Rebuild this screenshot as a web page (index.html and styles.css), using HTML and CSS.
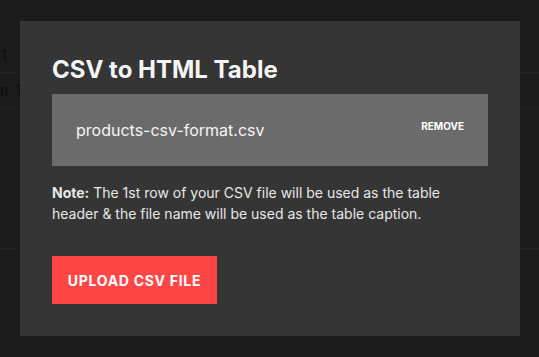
FILE: index.html
```html
<!DOCTYPE html>
<html lang="en">
<head>
<meta charset="utf-8">
<title>CSV to HTML Table</title>
<link rel="stylesheet" href="styles.css">
</head>
<body>
  <div class="page">
    <div class="row row-head"><span class="cell">Column 1</span></div>
    <div class="row row-body"><span class="cell cell-b">Header 1</span></div>
    <div class="row row-tall"></div>
  </div>

  <div class="modal">
    <h1 class="title">CSV to HTML Table</h1>
    <div class="file">
      <span class="file-name">products-csv-format.csv</span>
      <span class="remove">REMOVE</span>
    </div>
    <p class="note"><strong>Note:</strong> The 1st row of your CSV file will be used as the table header &amp; the file name will be used as the table caption.</p>
    <button class="upload" type="button">UPLOAD CSV FILE</button>
  </div>
</body>
</html>
```

FILE: styles.css
```css
* { box-sizing: border-box; }

html, body {
  margin: 0;
  padding: 0;
  width: 539px;
  height: 357px;
  overflow: hidden;
  background: #1b1b1b;
  font-family: Inter, "Noto Sans", sans-serif;
}

.page {
  display: flex;
  flex-direction: column;
  overflow: hidden;
}

.row {
  display: flex;
  align-items: center;
  border-bottom: 1px solid #222222;
  color: #0f0f0f;
  font-size: 16px;
}

.row-head { height: 73px; padding-top: 37px; }
.row-body { height: 35px; }
.row-tall { height: 141px; }

.cell { margin-left: -62px; white-space: nowrap; }
.cell-b { margin-left: -45px; }

.modal {
  position: absolute;
  left: 20px;
  top: 21px;
  width: 500px;
  height: 315px;
  background: #353535;
  padding: 34px 32px 32px 32px;
  display: flex;
  flex-direction: column;
  align-items: flex-start;
}

.title {
  margin: 0;
  font-size: 24px;
  line-height: 29px;
  font-weight: 700;
  color: #f4f4f4;
}

.file {
  margin-top: 10px;
  width: 436px;
  height: 72px;
  background: #6b6b6b;
  padding: 0 24px;
  display: flex;
  align-items: center;
  justify-content: space-between;
}

.file-name {
  font-size: 16px;
  color: #f5f5f5;
}

.remove {
  font-size: 10px;
  font-weight: 700;
  color: #ffffff;
  margin-bottom: 9px;
}

.note {
  margin: 16px 0 0 0;
  font-size: 14px;
  line-height: 21px;
  color: #e8e8e8;
  width: 436px;
}

.note strong { font-weight: 700; }

.upload {
  margin-top: 32px;
  height: 48px;
  width: 165px;
  padding: 0;
  border: none;
  background: #ff4646;
  color: #ffffff;
  font-family: Inter, "Noto Sans", sans-serif;
  font-size: 14px;
  font-weight: 700;
  letter-spacing: 0.7px;
  cursor: pointer;
}
```
